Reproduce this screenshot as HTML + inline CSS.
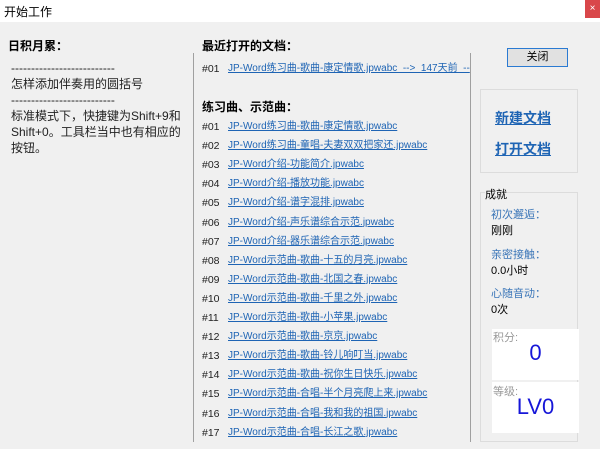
<!DOCTYPE html><html><head><meta charset="utf-8"><style>
*{margin:0;padding:0;box-sizing:border-box}
body{width:600px;height:449px;background:#f0f0f0;font-family:"Liberation Sans","Noto Sans CJK SC",sans-serif;position:relative;overflow:hidden;color:#000}
.a{position:absolute;white-space:nowrap}
.tb{position:absolute;left:0;top:0;width:600px;height:22px;background:#fff}
.x{position:absolute;left:585px;top:0;width:15px;height:18px;background:#d9474a;color:#fff;font-size:10px;text-align:center;line-height:17px}
.h{font-weight:bold;font-size:12px}
.n{font-size:10.5px;color:#222;line-height:14px}
.l{font-size:10px;color:#1e64b4;text-decoration:underline;line-height:14px}
.big{font-size:14px;font-weight:bold;color:#1e64b4;text-decoration:underline}
.b{color:#3b76b8;font-size:11px}
.v{font-size:11px}
</style></head><body>
<div class="tb"></div><div class="a" style="left:4px;top:3px;font-size:12px">开始工作</div><div class="x">×</div>
<div class="a h" style="left:8px;top:37px">日积月累：</div>
<div class="a" style="left:11px;top:60px;font-size:12px;line-height:16px;color:#222">--------------------------<br>怎样添加伴奏用的圆括号<br>--------------------------<br>标准模式下，快捷键为Shift+9和<br>Shift+0。工具栏当中也有相应的<br>按钮。</div>
<div class="a" style="left:193px;top:53px;width:1px;height:389px;background:#a0a0a0"></div>
<div class="a" style="left:470px;top:53px;width:1px;height:389px;background:#a0a0a0"></div>
<div class="a h" style="left:202px;top:37px">最近打开的文档：</div>
<div class="a n" style="left:202px;top:62px">#01</div><div class="a l" style="left:228px;top:62px">JP-Word练习曲-歌曲-康定情歌.jpwabc&nbsp; --&gt;&nbsp; 147天前&nbsp; --</div>
<div class="a h" style="left:202px;top:98px">练习曲、示范曲：</div>
<div id="list"></div>
<div class="a" style="left:507px;top:48px;width:61px;height:19px;border:1px solid #2a7ad2;background:#e1e1e1;font-size:11px;text-align:center;line-height:17px">关闭</div>
<div class="a" style="left:480px;top:89px;width:98px;height:84px;border:1px solid #dcdcdc"></div>
<div class="a big" style="left:495px;top:108px">新建文档</div>
<div class="a big" style="left:495px;top:139px">打开文档</div>
<div class="a" style="left:480px;top:192px;width:98px;height:250px;border:1px solid #dcdcdc"></div>
<div class="a" style="left:485px;top:186px;font-size:11px;background:#f0f0f0">成就</div>
<div class="a b" style="left:491px;top:206px">初次邂逅：</div><div class="a v" style="left:491px;top:222px">刚刚</div>
<div class="a b" style="left:491px;top:246px">亲密接触：</div><div class="a v" style="left:491px;top:262px">0.0小时</div>
<div class="a b" style="left:491px;top:285px">心随音动：</div><div class="a v" style="left:491px;top:301px">0次</div>
<div class="a" style="left:492px;top:329px;width:87px;height:51px;background:#fff"></div>
<div class="a" style="left:492px;top:382px;width:87px;height:51px;background:#fff"></div>
<div class="a" style="left:493px;top:329px;font-size:11px;color:#999">积分:</div>
<div class="a" style="left:492px;top:340px;width:87px;text-align:center;font-size:22px;color:#1616d8">0</div>
<div class="a" style="left:493px;top:383px;font-size:11px;color:#999">等级:</div>
<div class="a" style="left:492px;top:394px;width:87px;text-align:center;font-size:22px;color:#1616d8">LV0</div>
<script>
var t=["JP-Word练习曲-歌曲-康定情歌.jpwabc","JP-Word练习曲-童唱-夫妻双双把家还.jpwabc","JP-Word介绍-功能简介.jpwabc","JP-Word介绍-播放功能.jpwabc","JP-Word介绍-谱字混排.jpwabc","JP-Word介绍-声乐谱综合示范.jpwabc","JP-Word介绍-器乐谱综合示范.jpwabc","JP-Word示范曲-歌曲-十五的月亮.jpwabc","JP-Word示范曲-歌曲-北国之春.jpwabc","JP-Word示范曲-歌曲-千里之外.jpwabc","JP-Word示范曲-歌曲-小苹果.jpwabc","JP-Word示范曲-歌曲-京京.jpwabc","JP-Word示范曲-歌曲-铃儿响叮当.jpwabc","JP-Word示范曲-歌曲-祝你生日快乐.jpwabc","JP-Word示范曲-合唱-半个月亮爬上来.jpwabc","JP-Word示范曲-合唱-我和我的祖国.jpwabc","JP-Word示范曲-合唱-长江之歌.jpwabc"];
var h="";for(var i=0;i<17;i++){var y=120+i*19.1;h+='<div class="a n" style="left:202px;top:'+y+'px">#'+(i<9?'0':'')+(i+1)+'</div><div class="a l" style="left:228px;top:'+y+'px">'+t[i]+'</div>';}
document.getElementById("list").innerHTML=h;
</script>
</body></html>
